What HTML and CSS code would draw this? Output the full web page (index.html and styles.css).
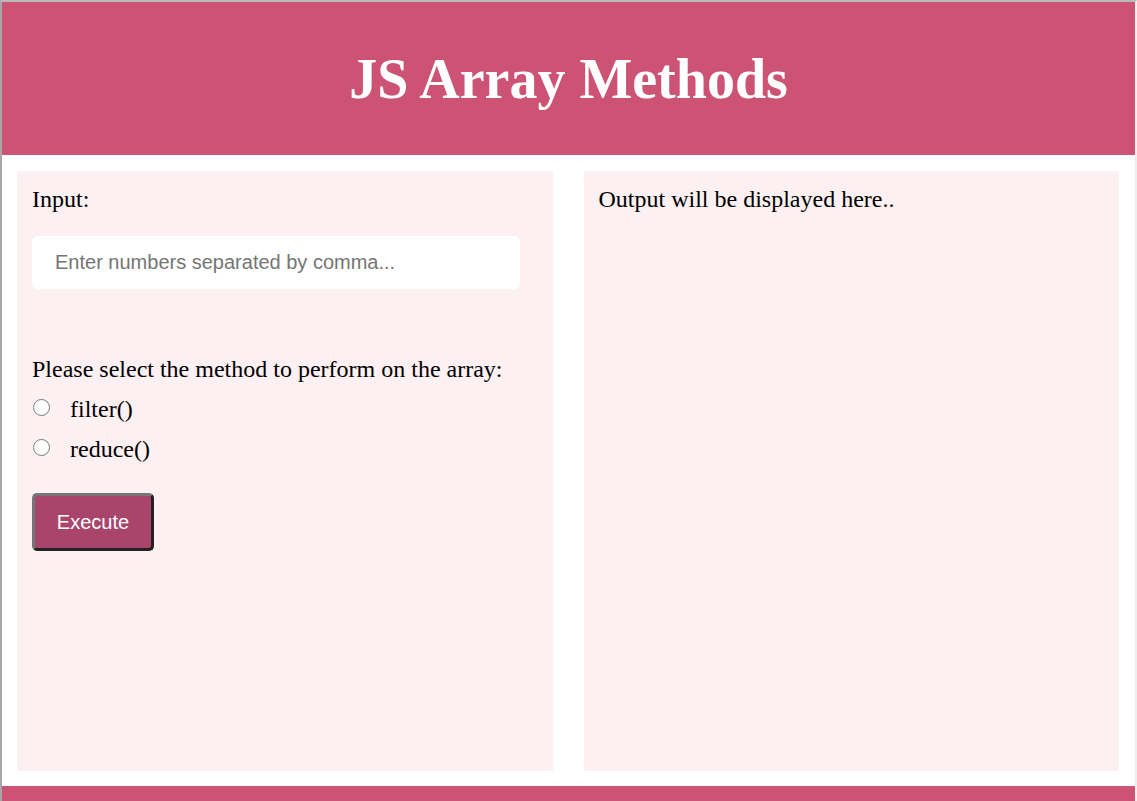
FILE: index.html
```html
<!DOCTYPE html>
<html lang="en">
<head>
<meta charset="utf-8">
<title>JS Array Methods</title>
<link rel="stylesheet" href="styles.css">
</head>
<body>
<header class="header">
  <h1 class="title">JS Array Methods</h1>
</header>
<main class="main">
  <section class="panel">
    <label class="label" for="numbers">Input:</label>
    <input class="text-input" id="numbers" type="text" placeholder="Enter numbers separated by comma...">
    <p class="prompt">Please select the method to perform on the array:</p>
    <div class="option">
      <input class="radio" type="radio" name="method" id="m-filter">
      <label class="option-label" for="m-filter">filter()</label>
    </div>
    <div class="option">
      <input class="radio" type="radio" name="method" id="m-reduce">
      <label class="option-label" for="m-reduce">reduce()</label>
    </div>
    <button class="btn" type="button">Execute</button>
  </section>
  <section class="panel">
    <p class="output">Output will be displayed here..</p>
  </section>
</main>
<footer class="footer"></footer>
</body>
</html>
```
FILE: styles.css
```css
html, body {
  margin: 0;
  padding: 0;
}
html {
  background: #ffffff;
}
body {
  box-sizing: border-box;
  width: 1137px;
  height: 801px;
  overflow: hidden;
  border-top: 2px solid #b9b9b9;
  border-left: 2px solid #a7a7a7;
  border-right: 2px solid #efefef;
  background: #ffffff;
  font-family: "Liberation Serif", "Times New Roman", serif;
  font-size: 24px;
  line-height: 28px;
  color: #000;
}
.header {
  height: 153px;
  background: #cd5374;
  display: flex;
  align-items: center;
  justify-content: center;
}
.title {
  margin: 0;
  color: #ffffff;
  font-family: "Liberation Serif", "Times New Roman", serif;
  font-weight: bold;
  font-size: 56px;
  line-height: 64px;
}
.main {
  display: flex;
  gap: 31px;
  padding: 16px 16px 15px 15px;
}
.panel {
  flex: 1;
  box-sizing: border-box;
  height: 600px;
  background: #fcf0f2;
  padding: 14px 15px;
}
.label {
  display: block;
  height: 28px;
}
.text-input {
  display: block;
  box-sizing: border-box;
  width: 488px;
  height: 53px;
  margin-top: 23px;
  padding: 0 23px;
  border: none;
  border-radius: 6px;
  background: #ffffff;
  font-family: "Liberation Sans", Arial, sans-serif;
  font-size: 20px;
  color: #000;
  outline: none;
}
.text-input::placeholder {
  color: #757575;
}
.prompt {
  margin: 66px 0 0;
  height: 28px;
}
.option {
  display: flex;
  align-items: flex-start;
  height: 28px;
  margin-top: 12px;
}
.radio {
  -webkit-appearance: none;
  appearance: none;
  box-sizing: border-box;
  width: 17px;
  height: 17px;
  margin: 4px 20px 0 1px;
  border: 1.5px solid #767676;
  border-radius: 50%;
  background: #ffffff;
  flex: none;
}
.option-label {
  line-height: 28px;
}
.btn {
  display: block;
  box-sizing: border-box;
  width: 122px;
  height: 58px;
  margin-top: 30px;
  padding: 0;
  background: #a9446a;
  color: #ffffff;
  border-style: solid;
  border-width: 3px;
  border-color: #767676 #222222 #222222 #767676;
  border-radius: 5px;
  font-family: "Liberation Sans", Arial, sans-serif;
  font-size: 20px;
}
.output {
  margin: 0;
  height: 28px;
}
.footer {
  height: 15px;
  background: #cd5374;
}
```
